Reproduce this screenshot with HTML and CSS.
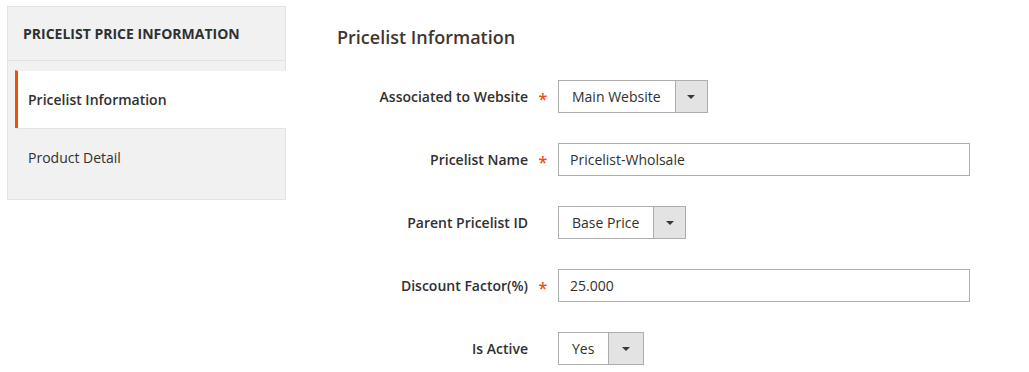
FILE: index.html
```html
<!DOCTYPE html>
<html lang="en">
<head>
<meta charset="utf-8">
<title>Pricelist Information</title>
<link rel="stylesheet" href="styles.css">
</head>
<body>
<div class="page">
  <aside class="nav">
    <div class="nav-title">PRICELIST PRICE INFORMATION</div>
    <ul class="nav-items">
      <li class="nav-item active"><a>Pricelist Information</a></li>
      <li class="nav-item"><a>Product Detail</a></li>
    </ul>
  </aside>
  <main class="content">
    <h2 class="legend">Pricelist Information</h2>
    <div class="form">
      <div class="row">
        <label class="label">Associated to Website</label>
        <span class="req">*</span>
        <div class="select"><span class="value">Main Website</span><span class="btn"><i class="arrow"></i></span></div>
      </div>
      <div class="row">
        <label class="label">Pricelist Name</label>
        <span class="req">*</span>
        <div class="input">Pricelist-Wholsale</div>
      </div>
      <div class="row">
        <label class="label">Parent Pricelist ID</label>
        <span class="req"></span>
        <div class="select"><span class="value">Base Price</span><span class="btn"><i class="arrow"></i></span></div>
      </div>
      <div class="row">
        <label class="label">Discount Factor(%)</label>
        <span class="req">*</span>
        <div class="input">25.000</div>
      </div>
      <div class="row">
        <label class="label">Is Active</label>
        <span class="req"></span>
        <div class="select short"><span class="value">Yes</span><span class="btn"><i class="arrow"></i></span></div>
      </div>
    </div>
  </main>
</div>
</body>
</html>
```
FILE: styles.css
```css
* { box-sizing: border-box; }
html, body { margin: 0; padding: 0; background: #fff; }
body {
  font-family: "Open Sans", "DejaVu Sans", sans-serif;
  font-size: 14px;
  color: #303030;
}
.page {
  display: flex;
  align-items: flex-start;
  padding: 6px 0 0 7px;
}
.nav {
  width: 279px;
  flex: none;
  background: #f1f1f1;
  border: 1px solid #e3e3e3;
  padding-bottom: 13px;
}
.nav-title {
  height: 54px;
  border-bottom: 1px solid #e3e3e3;
  padding: 0 15px;
  display: flex;
  align-items: center;
  font-weight: 700;
  font-size: 14px;
  color: #303030;
}
.nav-items {
  list-style: none;
  margin: 9px -1px 0 7px;
  padding: 0;
}
.nav-item {
  border-left: 3px solid transparent;
  border-top: 1px solid #e3e3e3;
}
.nav-item a {
  display: flex;
  align-items: center;
  height: 57px;
  padding: 0 10px;
  color: #303030;
}
.nav-item.active {
  background: #fff;
  border-left-color: #eb5202;
  border-top-color: #f1f1f1;
}
.nav-item.active a { font-weight: 600; }
.content {
  padding: 19px 0 0 51px;
  flex: 1;
}
.legend {
  margin: 0;
  font-size: 18px;
  line-height: 24px;
  font-weight: 600;
  color: #41362f;
}
.form {
  margin-top: 31px;
  display: flex;
  flex-direction: column;
  gap: 30px;
}
.row {
  display: grid;
  grid-template-columns: 191px 30px 412px;
  align-items: center;
  height: 33px;
}
.label {
  text-align: right;
  font-weight: 600;
  color: #303030;
}
.req {
  color: #eb5202;
  text-align: center;
  font-size: 16px;
  padding-top: 4px;
  font-weight: 600;
}
.input {
  height: 33px;
  border: 1px solid #adadad;
  padding: 0 11px;
  display: flex;
  align-items: center;
}
.select {
  justify-self: start;
  height: 33px;
  border: 1px solid #adadad;
  display: flex;
  align-items: stretch;
}
.select .value {
  display: flex;
  align-items: center;
  padding: 0 14px 0 13px;
}
.select .btn {
  width: 32px;
  background: #e3e3e3;
  border-left: 1px solid #adadad;
  display: flex;
  align-items: center;
  justify-content: center;
}
.select.short .btn { width: 35px; }
.arrow {
  width: 0;
  height: 0;
  border-left: 4px solid transparent;
  border-right: 4px solid transparent;
  border-top: 4px solid #41362f;
}
```
